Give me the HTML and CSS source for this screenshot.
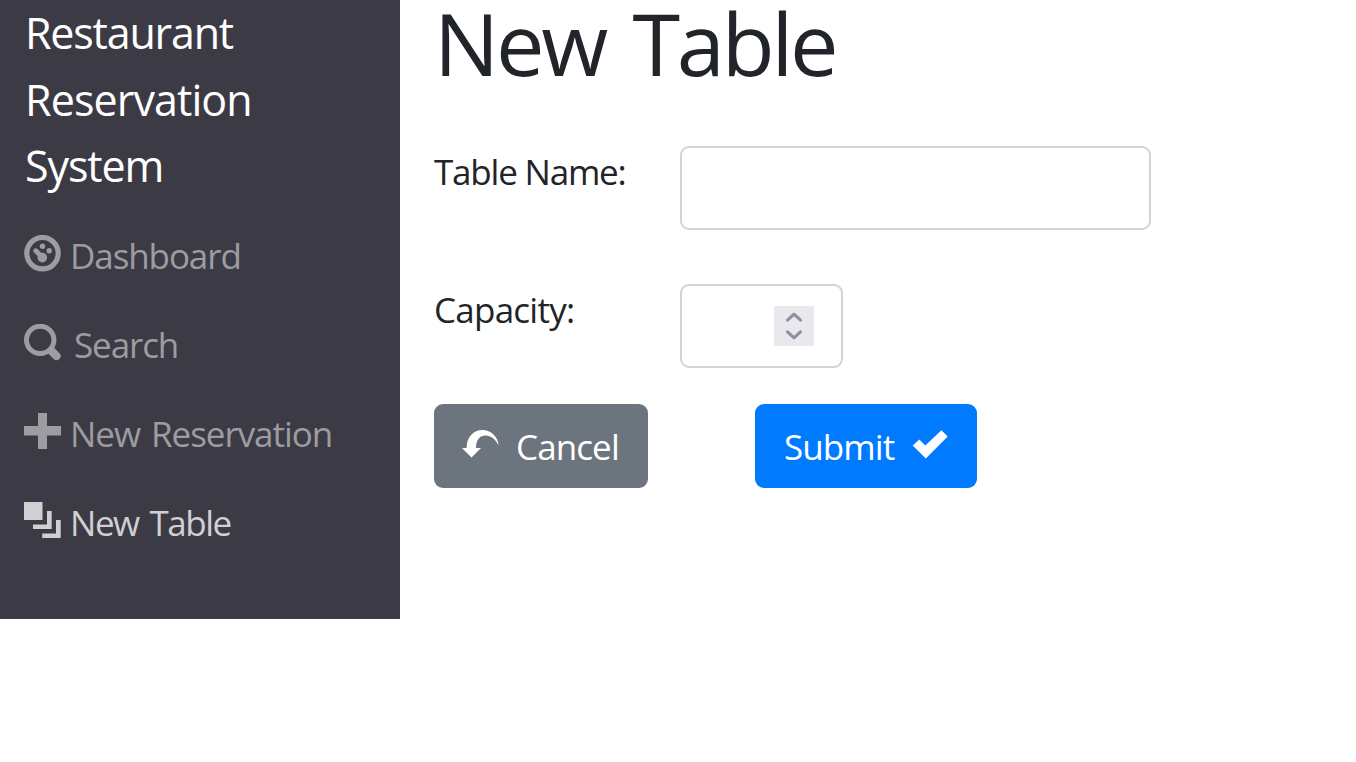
FILE: index.html
```html
<!DOCTYPE html>
<html lang="en">
<head>
<meta charset="utf-8">
<title>New Table</title>
<link rel="stylesheet" href="styles.css">
</head>
<body>
<div class="app">
  <nav class="sidebar">
    <a class="brand"><span class="brand-a">Restaurant</span><br><span class="brand-b">Reservation</span><br><span class="brand-c">System</span></a>
    <ul class="menu">
      <li class="item">
        <svg class="icon" viewBox="0 0 37 37"><circle cx="18.5" cy="18.2" r="15.7" fill="none" stroke="currentColor" stroke-width="5.2"/><circle cx="18.5" cy="11.2" r="2.7"/><circle cx="25.2" cy="15.7" r="2.7"/><circle cx="18.3" cy="22.6" r="4.8"/><path d="M11.8 15.8 17.5 21.5" stroke="currentColor" stroke-width="4.9" stroke-linecap="round"/></svg>
        <span class="label dashboard">Dashboard</span>
      </li>
      <li class="item">
        <svg class="icon" viewBox="0 0 37 37"><circle cx="16.2" cy="15.9" r="13.7" fill="none" stroke="currentColor" stroke-width="5"/><path d="m27.5 27 5 5" stroke="currentColor" stroke-width="8.2" stroke-linecap="round"/></svg>
        <span class="label search">Search</span>
      </li>
      <li class="item">
        <svg class="icon" viewBox="0 0 37 37"><path d="M14 0h9v13h14v9.5H23V36h-9V22.5H0V13h14z"/></svg>
        <span class="label reservation">New Reservation</span>
      </li>
      <li class="item active">
        <svg class="icon" viewBox="0 0 37 37"><path d="M0 0h18.5v18H0zM23 9h4.700v18H9v-4.500h14zM32 18h4.700v18H18.200v-4.500H32z"/></svg>
        <span class="label table">New Table</span>
      </li>
    </ul>
  </nav>
  <main class="content">
    <h1 class="title">New Table</h1>
    <form class="form">
      <div class="field"><label class="caption name" for="name">Table Name:</label><input class="control" id="name" type="text"></div>
      <div class="field"><label class="caption capacity" for="capacity">Capacity:</label>
        <div class="control number"><input class="number-input" id="capacity" type="text"><span class="spinner"><svg class="arrows" viewBox="0 0 40 40"><path d="m13.500 14.200 6.500-6 6.500 6M13.500 25.800l6.500 6 6.500-6"/></svg></span></div>
      </div>
      <div class="actions">
        <button class="button cancel" type="button"><svg class="button-icon" viewBox="0 0 37 36"><path d="M0 18h4.600C4.600 7 11.500 0 20.500 0 29 0 36 6.500 36.600 15.500 33.500 9 28.500 5.500 24 5.500 17.500 5.500 14 10 14 18h5l-9.500 9.600z"/></svg><span class="cancel-text">Cancel</span></button>
        <button class="button submit" type="button"><span class="submit-text">Submit</span><svg class="button-icon" viewBox="0 0 37 36"><path d="m.7 15.600 6.600-6.200 6 6L29.400.3l6.300 6.200L13.800 28.500z"/></svg></button>
      </div>
    </form>
  </main>
</div>
</body>
</html>
```
FILE: styles.css
```css
* { box-sizing: border-box; }
body { margin: 0; background: #fff; color: #212529; font-family: "Open Sans", "Noto Sans", sans-serif; font-size: 35px; }
.app { display: flex; align-items: flex-start; }
.sidebar { width: 400px; height: 619px; padding-left: 24px; background: #3c3b45; flex: none; }
.brand { display: block; height: 211px; padding-left: 1px; color: #fff; font-size: 43px; line-height: 66.6px; white-space: nowrap; }
.brand-a { letter-spacing: -1.2px; }
.brand-b { letter-spacing: -.9px; }
.brand-c { letter-spacing: -1.1px; }
.menu { list-style: none; margin: 0; padding: 0; }
.item { display: flex; align-items: flex-start; height: 89px; color: #9c9ca1; }
.item.active { color: #cfd0d1; }
.icon { width: 37px; height: 37px; margin-top: 24px; fill: currentColor; flex: none; }
.label { margin-left: 9px; line-height: 89px; white-space: nowrap; }
.dashboard { letter-spacing: -1.1px; }
.label.search { margin-left: 13px; letter-spacing: -1.1px; }
.reservation { letter-spacing: -1.05px; word-spacing: 3px; }
.table { letter-spacing: -1.45px; word-spacing: 3px; }
.content { padding-left: 34px; }
.title { margin: 0; height: 146px; font-weight: 400; font-size: 86.5px; line-height: 85px; letter-spacing: -3.2px; word-spacing: 8px; white-space: nowrap; }
.field { display: flex; height: 138px; }
.caption { width: 246px; line-height: 52px; white-space: nowrap; }
.name { letter-spacing: -1.2px; }
.capacity { letter-spacing: -.75px; }
.control { width: 471px; height: 84px; border: 2px solid #ced4da; border-radius: 9px; background: #fff; outline: none; font: inherit; }
.number { width: 163px; display: flex; align-items: center; padding: 0 27px 0 20px; }
.number-input { width: 72px; min-width: 0; border: 0; outline: 0; font: inherit; background: transparent; }
.spinner { width: 40px; height: 40px; background: #e9e8ed; flex: none; }
.arrows { display: block; fill: none; stroke: #8f8e9f; stroke-width: 3; stroke-linecap: round; stroke-linejoin: round; }
.actions { display: flex; gap: 107px; margin-top: -18px; }
.button { display: flex; align-items: center; height: 84px; border: 0; border-radius: 9px; padding: 0 28px; color: #fff; font: inherit; white-space: nowrap; }
.cancel { width: 214px; background: #6c757d; gap: 17px; justify-content: flex-start; }
.submit { width: 222px; background: #007bff; gap: 18px; padding: 0 0 0 29px; justify-content: flex-start; }
.cancel-text { letter-spacing: -.9px; }
.submit-text { letter-spacing: -.9px; }
.button-icon { width: 37px; height: 36px; margin-top: 4px; fill: currentColor; flex: none; }
```
